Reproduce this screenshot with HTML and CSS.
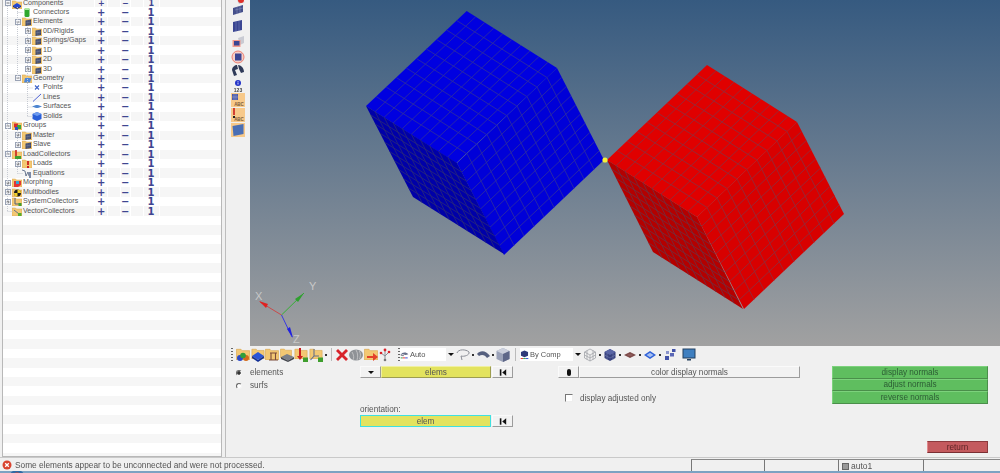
FILE: index.html
```html
<!DOCTYPE html>
<html lang="en">
<head>
<meta charset="utf-8">
<title>Normals</title>
<link rel="stylesheet" href="styles.css">
</head>
<body>
<svg class="defs" aria-hidden="true">
  <defs>
    <symbol id="plus" viewBox="0 0 6 6"><rect x=".5" y=".5" width="5" height="5" fill="#f4f6fa" stroke="#9aa3b5"/><path d="M1.5 3h3M3 1.5v3" stroke="#555" stroke-width=".8"/></symbol>
    <symbol id="minus" viewBox="0 0 6 6"><rect x=".5" y=".5" width="5" height="5" fill="#f4f6fa" stroke="#9aa3b5"/><path d="M1.5 3h3" stroke="#555" stroke-width=".8"/></symbol>
    <symbol id="folder" viewBox="0 0 10 9"><path d="M0 1h3.5l1 1H10v7H0z" fill="#f3c873" stroke="#d9a64e" stroke-width=".5"/></symbol>
    <symbol id="f-mesh" viewBox="0 0 10 9"><use href="#folder" width="10" height="9"/><path d="M3.5 3.5 9 2.5V8L3.5 9z" fill="#3c4666"/><path d="M5.2 3v6M7 3v5.5M3.5 6 9 5" stroke="#8a93ad" stroke-width=".4"/></symbol>
    <symbol id="f-comp" viewBox="0 0 10 9"><use href="#folder" width="10" height="9"/><path d="M1 5.5 5 3l4 2.5L5 8z" fill="#2148d8"/><path d="M1 5.5V7l4 2 4-2V5.5L5 8z" fill="#0f2a96"/></symbol>
    <symbol id="f-geo" viewBox="0 0 10 9"><use href="#folder" width="10" height="9"/><path d="M3 4h6.500L8 8.500H2z" fill="#4d87d8"/></symbol>
    <symbol id="f-groups" viewBox="0 0 10 9"><use href="#folder" width="10" height="9"/><rect x="2" y="2.500" width="4" height="4" fill="#d92a2a"/><rect x="5" y="4" width="4" height="4" fill="#3aa63a"/><rect x="3" y="6" width="3" height="3" fill="#2f4fc0"/></symbol>
    <symbol id="f-load" viewBox="0 0 10 9"><use href="#folder" width="10" height="9"/><path d="M4 0v6" stroke="#c91f1f" stroke-width="1.600"/><rect x="3" y="6" width="6" height="3" fill="#3f9e2e"/></symbol>
    <symbol id="f-loads" viewBox="0 0 10 9"><use href="#folder" width="10" height="9"/><path d="M6 2v4" stroke="#c91f1f" stroke-width="1.800"/><rect x="5" y="7" width="2" height="2" fill="#c91f1f"/></symbol>
    <symbol id="f-morph" viewBox="0 0 10 9"><use href="#folder" width="10" height="9"/><path d="M2 3h7v4l-3 2H2z" fill="#e23636"/><path d="M4 3h3v3H4z" fill="#35a6d8"/></symbol>
    <symbol id="f-multi" viewBox="0 0 10 9"><use href="#folder" width="10" height="9"/><circle cx="5.500" cy="5" r="3.500" fill="#1d1d1d"/><path d="M5.500 5V1.500A3.500 3.500 0 0 1 9 5z" fill="#f1cf2a"/><path d="M5.500 5H2A3.500 3.500 0 0 0 5.500 8.500z" fill="#f1cf2a"/></symbol>
    <symbol id="f-sys" viewBox="0 0 10 9"><use href="#folder" width="10" height="9"/><path d="M3 1v6h5" fill="none" stroke="#55617c" stroke-width="1"/><rect x="6.500" y="6" width="3" height="3" fill="#3f9e2e"/></symbol>
    <symbol id="f-vec" viewBox="0 0 10 9"><use href="#folder" width="10" height="9"/><path d="M2 3l5 4" stroke="#66708a" stroke-width="1"/><rect x="6" y="6" width="3.500" height="3" fill="#57ad2c"/></symbol>
    <symbol id="conn" viewBox="0 0 10 9"><rect x="2.500" y="0" width="5" height="9" rx="1.500" fill="#2ea82e"/><rect x="2.500" y="0" width="5" height="2" rx="1" fill="#aee6a0"/></symbol>
    <symbol id="pts" viewBox="0 0 10 9"><path d="M3 2.500 7 6.500M7 2.500 3 6.500" stroke="#3c62c8" stroke-width="1.100"/></symbol>
    <symbol id="lin" viewBox="0 0 10 9"><path d="M1 8.500 9 1" stroke="#3c52d0" stroke-width=".9"/></symbol>
    <symbol id="srf" viewBox="0 0 10 9"><path d="M0 4.500 4 3l2 0 4 1.500L6 6H4z" fill="#4f86d0"/></symbol>
    <symbol id="sld" viewBox="0 0 10 9"><path d="M5 0l4.500 2v5L5 9 .5 7V2z" fill="#2a5fd8"/><path d="M5 0l4.500 2L5 4 .5 2z" fill="#6e9bee"/></symbol>
    <symbol id="eq" viewBox="0 0 10 9"><path d="M0 1l3 1 1 5 2-4 1 4" fill="none" stroke="#4a5a78" stroke-width=".8"/><rect x="7" y="3" width="2" height="6" fill="#7d8aa6"/></symbol>

    <symbol id="b-blocks" viewBox="0 0 14 14"><use href="#folder" width="14" height="12"/><circle cx="4" cy="10" r="3" fill="#2b49c8"/><circle cx="10" cy="10" r="3" fill="#d36a1c"/><circle cx="7" cy="7.500" r="2.800" fill="#2f9e3a"/></symbol>
    <symbol id="b-stack" viewBox="0 0 14 14"><use href="#folder" width="14" height="11"/><path d="M1 8l6-4 6 4-6 4z" fill="#2b55d8"/><path d="M1 8v2l6 4 6-4V8l-6 4z" fill="#122f96"/></symbol>
    <symbol id="b-pi" viewBox="0 0 14 14"><use href="#folder" width="14" height="12"/><path d="M5 5h7M6 5v7M10.500 5v7M4 12h9" stroke="#7b4b3a" stroke-width="1.100" fill="none"/></symbol>
    <symbol id="b-plate" viewBox="0 0 14 14"><use href="#folder" width="12" height="10"/><path d="M1 9l6-3 7 3-6 3.500z" fill="#7c8088"/><path d="M1 9v2l7 3 6-3V9l-6 3.500z" fill="#44474e"/></symbol>
    <symbol id="b-force" viewBox="0 0 14 14"><use href="#folder" width="14" height="11"/><path d="M6 0v9" stroke="#c91f1f" stroke-width="2"/><path d="M3 8h6l-3 4z" fill="#c91f1f"/><rect x="9" y="9.500" width="5" height="4.500" fill="#3f9e2e"/></symbol>
    <symbol id="b-axis" viewBox="0 0 14 14"><use href="#folder" width="14" height="11"/><path d="M5 1v7L1.500 12M5 8h5" fill="none" stroke="#66708a" stroke-width="1.100"/><rect x="9" y="9.500" width="5" height="4.500" fill="#3f9e2e"/></symbol>
    <symbol id="b-x" viewBox="0 0 14 14"><path d="M3 1l4 4 4-4 2 2-4 4 4 4-2 2-4-4-4 4-2-2 4-4-4-4z" fill="#d8232a"/></symbol>
    <symbol id="b-ball" viewBox="0 0 14 14"><ellipse cx="7" cy="7" rx="7" ry="5.500" fill="#8f9296"/><path d="M3 4c2 3 2 6 1 8M7 2c2 3 2 7 1 10M10.500 3c1.500 3 1 6 0 8" stroke="#d3d3d3" stroke-width=".7" fill="none"/></symbol>
    <symbol id="b-fold" viewBox="0 0 14 14"><use href="#folder" width="14" height="12"/><path d="M3 8h6V5l5 4-5 4v-3H3z" fill="#e3402a"/></symbol>
    <symbol id="b-tree" viewBox="0 0 14 14"><path d="M7 1v12M3 5l4 3 4-4" fill="none" stroke="#8b8e96" stroke-width="1"/><circle cx="7" cy="2" r="1.400" fill="#d8232a"/><circle cx="3" cy="5" r="1.300" fill="#d8232a"/><circle cx="11" cy="4" r="1.300" fill="#d8232a"/><circle cx="7" cy="12" r="1.300" fill="#777"/></symbol>
    <symbol id="b-shade" viewBox="0 0 14 14"><path d="M1 7c2-5 9-5 12-1L9 7 4 6z" fill="#68708a"/><path d="M1 7c2 1 3 1 5 1" stroke="#3b4158"/><path d="M1 11.500h3" stroke="#2fa344" stroke-width="1.500"/><path d="M4 11.500h4" stroke="#e33" stroke-width="1.500"/><path d="M8 11.500h4" stroke="#3650d8" stroke-width="1.500"/></symbol>
    <symbol id="b-lasso" viewBox="0 0 14 14"><path d="M1 5c1-4 9-4 12-1 1 3-5 5-8 4L6 12" fill="none" stroke="#8b8e96" stroke-width="1"/></symbol>
    <symbol id="b-wing" viewBox="0 0 14 14"><path d="M1 6c3-4 9-4 13 2l-3 2C9 7 6 6 3 8z" fill="#56607e"/></symbol>
    <symbol id="b-box" viewBox="0 0 14 14"><path d="M7 0l6.500 3v8L7 14 .5 11V3z" fill="#9ba2b8"/><path d="M7 0l6.500 3L7 6 .5 3z" fill="#ccd0dc"/><path d="M7 6l6.500-3v8L7 14z" fill="#5e6788"/></symbol>
    <symbol id="b-comp" viewBox="0 0 14 14"><path d="M7 0l5.500 2.500V8L7 10.500 1.500 8V2.500z" fill="#2f3a78"/><path d="M1 12.500h4" stroke="#e33" stroke-width="1.500"/><path d="M5 12.500h4" stroke="#2fa344" stroke-width="1.500"/><path d="M9 12.500h4" stroke="#3650d8" stroke-width="1.500"/></symbol>
    <symbol id="b-wire" viewBox="0 0 14 14"><path d="M7 1l5.500 3v6L7 13l-5.500-3V4zM7 7v6M7 7 1.500 4M7 7l5.500-3M4 2.500v9M10 2.500v9M1.500 7 7 10l5.500-3" fill="none" stroke="#9a9ca2" stroke-width=".7"/></symbol>
    <symbol id="b-solid" viewBox="0 0 14 14"><path d="M7 1l5.500 3v6L7 13l-5.500-3V4z" fill="#39437f"/><path d="M7 1l5.500 3L7 7 1.500 4z" fill="#5a66a6"/><path d="M4 5v7M10 5v7M1.500 7 7 10l5.500-3" stroke="#7e88bb" stroke-width=".5" fill="none"/></symbol>
    <symbol id="b-flat" viewBox="0 0 14 14"><path d="M1 7l6-3 6 3-6 3z" fill="#7a4a48"/><path d="M4 5.500 10 8.500M10 5.500 4 8.500" stroke="#a87070" stroke-width=".5"/></symbol>
    <symbol id="b-diamond" viewBox="0 0 14 14"><path d="M1 7l6-4 6 4-6 4z" fill="#2f61d8"/><path d="M3.500 7 7 4.800 10.500 7 7 9.200z" fill="#a6c0f2"/></symbol>
    <symbol id="b-dots" viewBox="0 0 14 14"><rect x="2" y="8" width="4" height="4" fill="#4353a8"/><rect x="7" y="5" width="4" height="3.500" fill="#5a67b5"/><rect x="9" y="1" width="3.500" height="3" fill="#4353a8"/><rect x="3" y="3" width="3" height="3" fill="#8b95cc"/></symbol>
    <symbol id="b-mon" viewBox="0 0 14 14"><rect x="1" y="1" width="12" height="9" fill="#3f7fc0" stroke="#24405f"/><path d="M5 11h4v1.500H5z" fill="#24405f"/></symbol>
    <symbol id="v-sq1" viewBox="0 0 14 14"><path d="M2 4l10-3v7L2 11z" fill="#444f8a"/><path d="M4 6l8-2M6 3v7M9 2v7" stroke="#8f98c3" stroke-width=".5"/></symbol>
    <symbol id="v-sq2" viewBox="0 0 14 14"><path d="M2 3l9-2v10l-9 2z" fill="#3a4592"/><path d="M5 2.500v10M8 2v10" stroke="#7e88bb" stroke-width=".5"/></symbol>
    <symbol id="v-sq3" viewBox="0 0 14 14"><path d="M7 3l6-2v7l-4 2z" fill="#c9cbd3"/><rect x="1.500" y="5" width="8" height="7" fill="#f29a8d"/><rect x="3" y="6" width="5.500" height="4.500" fill="#3a4592"/></symbol>
    <symbol id="v-ring" viewBox="0 0 14 14"><circle cx="7" cy="7" r="6" fill="#f6cfc9" stroke="#ec7f70"/><rect x="4" y="3.500" width="6.500" height="7" fill="#3a4592"/></symbol>
    <symbol id="v-hex" viewBox="0 0 14 14"><path d="M1 7c0-3 3-5 5-5l1 4-3 1 2 5-3 1zM7 2c3 0 6 3 6 7l-3 1-2-4z" fill="#2f3a58"/></symbol>
    <symbol id="v-info" viewBox="0 0 14 14"><circle cx="7" cy="7" r="3" fill="#2434c8"/><path d="M7 5v.8M7 6.500v2" stroke="#fff" stroke-width=".8"/></symbol>
    <symbol id="v-abc1" viewBox="0 0 14 14"><rect width="14" height="14" fill="#f7c98a"/><rect x="1" y="1" width="6" height="6" fill="#4a5aa8"/><path d="M3 1v6M5 1v6M1 4h6" stroke="#b6bedd" stroke-width=".4"/><text x="8" y="12.500" font-size="4.500" font-weight="700" text-anchor="middle" font-family="Liberation Sans" fill="#7a5a3c">ABC</text></symbol>
    <symbol id="v-abc2" viewBox="0 0 14 14"><rect width="14" height="14" fill="#f7c98a"/><path d="M3 0v7" stroke="#c91f1f" stroke-width="1.600"/><rect x="2" y="8" width="2" height="2" fill="#222"/><text x="8" y="12.500" font-size="4.500" font-weight="700" text-anchor="middle" font-family="Liberation Sans" fill="#7a5a3c">ABC</text></symbol>
    <symbol id="v-plane" viewBox="0 0 14 14"><rect width="14" height="14" fill="#f7c98a"/><path d="M1.500 3 12.500 1v10L2.500 13z" fill="#4a6fb4"/></symbol>
    <symbol id="rst" viewBox="0 0 10 8"><rect x="1" y="0" width="2" height="8" fill="#111"/><path d="M9 0v8L4 4z" fill="#111"/></symbol>
  </defs>
</svg>

<div class="app">
  <div class="main">
    <section class="tree">
      <div class="rows">
        <div class="row"><div class="name l0"><svg class="box"><use href="#minus"/></svg><svg class="ico"><use href="#f-comp"/></svg>Components</div><b>+</b><b>−</b><b>1</b></div>
        <div class="row"><div class="name l1"><i class="box"></i><svg class="ico"><use href="#conn"/></svg>Connectors</div><b>+</b><b>−</b><b>1</b></div>
        <div class="row"><div class="name l1"><svg class="box"><use href="#minus"/></svg><svg class="ico"><use href="#f-mesh"/></svg>Elements</div><b>+</b><b>−</b><b>1</b></div>
        <div class="row"><div class="name l2"><svg class="box"><use href="#plus"/></svg><svg class="ico"><use href="#f-mesh"/></svg>0D/Rigids</div><b>+</b><b>−</b><b>1</b></div>
        <div class="row"><div class="name l2"><svg class="box"><use href="#plus"/></svg><svg class="ico"><use href="#f-mesh"/></svg>Springs/Gaps</div><b>+</b><b>−</b><b>1</b></div>
        <div class="row"><div class="name l2"><svg class="box"><use href="#plus"/></svg><svg class="ico"><use href="#f-mesh"/></svg>1D</div><b>+</b><b>−</b><b>1</b></div>
        <div class="row"><div class="name l2"><svg class="box"><use href="#plus"/></svg><svg class="ico"><use href="#f-mesh"/></svg>2D</div><b>+</b><b>−</b><b>1</b></div>
        <div class="row"><div class="name l2"><svg class="box"><use href="#plus"/></svg><svg class="ico"><use href="#f-mesh"/></svg>3D</div><b>+</b><b>−</b><b>1</b></div>
        <div class="row"><div class="name l1"><svg class="box"><use href="#minus"/></svg><svg class="ico"><use href="#f-geo"/></svg>Geometry</div><b>+</b><b>−</b><b>1</b></div>
        <div class="row"><div class="name l2"><i class="box"></i><svg class="ico"><use href="#pts"/></svg>Points</div><b>+</b><b>−</b><b>1</b></div>
        <div class="row"><div class="name l2"><i class="box"></i><svg class="ico"><use href="#lin"/></svg>Lines</div><b>+</b><b>−</b><b>1</b></div>
        <div class="row"><div class="name l2"><i class="box"></i><svg class="ico"><use href="#srf"/></svg>Surfaces</div><b>+</b><b>−</b><b>1</b></div>
        <div class="row"><div class="name l2"><i class="box"></i><svg class="ico"><use href="#sld"/></svg>Solids</div><b>+</b><b>−</b><b>1</b></div>
        <div class="row"><div class="name l0"><svg class="box"><use href="#minus"/></svg><svg class="ico"><use href="#f-groups"/></svg>Groups</div><b>+</b><b>−</b><b>1</b></div>
        <div class="row"><div class="name l1"><svg class="box"><use href="#plus"/></svg><svg class="ico"><use href="#f-mesh"/></svg>Master</div><b>+</b><b>−</b><b>1</b></div>
        <div class="row"><div class="name l1"><svg class="box"><use href="#plus"/></svg><svg class="ico"><use href="#f-mesh"/></svg>Slave</div><b>+</b><b>−</b><b>1</b></div>
        <div class="row"><div class="name l0"><svg class="box"><use href="#minus"/></svg><svg class="ico"><use href="#f-load"/></svg>LoadCollectors</div><b>+</b><b>−</b><b>1</b></div>
        <div class="row"><div class="name l1"><svg class="box"><use href="#plus"/></svg><svg class="ico"><use href="#f-loads"/></svg>Loads</div><b>+</b><b>−</b><b>1</b></div>
        <div class="row"><div class="name l1"><i class="box"></i><svg class="ico"><use href="#eq"/></svg>Equations</div><b>+</b><b>−</b><b>1</b></div>
        <div class="row"><div class="name l0"><svg class="box"><use href="#plus"/></svg><svg class="ico"><use href="#f-morph"/></svg>Morphing</div><b>+</b><b>−</b><b>1</b></div>
        <div class="row"><div class="name l0"><svg class="box"><use href="#plus"/></svg><svg class="ico"><use href="#f-multi"/></svg>Multibodies</div><b>+</b><b>−</b><b>1</b></div>
        <div class="row"><div class="name l0"><svg class="box"><use href="#plus"/></svg><svg class="ico"><use href="#f-sys"/></svg>SystemCollectors</div><b>+</b><b>−</b><b>1</b></div>
        <div class="row"><div class="name l0"><i class="box"></i><svg class="ico"><use href="#f-vec"/></svg>VectorCollectors</div><b>+</b><b>−</b><b>1</b></div>
      </div>
      <div class="tree-fill"></div>
      <svg class="tree-lines" width="220" height="220" viewBox="0 0 220 220" aria-hidden="true">
        <path d="M4.500 6V211.500M14.500 7V79M24.500 27V117M14.500 130V145.500M14.500 159V173.500M14.500 12.500H20M24.500 88H30M24.500 97.500H30M24.500 107H30M24.500 116.500H30M14.500 173.500H20M4.500 211.500H10" fill="none" stroke="#c6cad2" stroke-dasharray="1 1"/>
      </svg>
    </section>

    <div class="workspace">
      <div class="top">
        <nav class="vbar">
          <svg class="vi" viewBox="0 10 14 4"><path d="M6 10l8 2-6 2z" fill="#c9cbd3"/><circle cx="10" cy="10" r="3" fill="#e0302a"/></svg>
          <svg class="vi"><use href="#v-sq1"/></svg>
          <svg class="vi"><use href="#v-sq2"/></svg>
          <svg class="vi"><use href="#v-sq3"/></svg>
          <svg class="vi"><use href="#v-ring"/></svg>
          <svg class="vi"><use href="#v-hex"/></svg>
          <svg class="vi"><use href="#v-info"/></svg>
          <span class="v123">123</span>
          <svg class="vi"><use href="#v-abc1"/></svg>
          <svg class="vi"><use href="#v-abc2"/></svg>
          <svg class="vi"><use href="#v-plane"/></svg>
        </nav>
        <svg class="view" viewBox="250 0 750 346" preserveAspectRatio="none" role="img" aria-label="Two meshed cubes">
          <defs>
            <linearGradient id="sky" x1="0" y1="0" x2="0" y2="1"><stop offset="0" stop-color="#365a80"/><stop offset="1" stop-color="#a1a1a1"/></linearGradient>
            <path id="grid" d="M10 0V100M20 0V100M30 0V100M40 0V100M50 0V100M60 0V100M70 0V100M80 0V100M90 0V100M0 10H100M0 20H100M0 30H100M0 40H100M0 50H100M0 60H100M0 70H100M0 80H100M0 90H100" vector-effect="non-scaling-stroke" fill="none"/>
            <rect id="sq" width="100" height="100"/>
          </defs>
          <rect x="250" width="750" height="346" fill="url(#sky)"/>
          <g class="blue">
            <g transform="matrix(.903 .57 -1.007 .95 466.700 11)"><use href="#sq" fill="#0000e0"/><use href="#grid" class="line"/></g>
            <g transform="matrix(-1 .95 .47 .92 557 68)"><use href="#sq" fill="#0000d8"/><use href="#grid" class="line"/></g>
            <g transform="matrix(.91 .57 .47 .91 366 106)" class="shade"><use href="#sq" fill="#0000a8"/><use href="#grid" class="line"/></g>
          </g>
          <g class="red">
            <g transform="matrix(.9 .57 -1 .95 707 65)"><use href="#sq" fill="#e00000"/><use href="#grid" class="line"/></g>
            <g transform="matrix(-1 .95 .47 .92 797 122)"><use href="#sq" fill="#d80000"/><use href="#grid" class="line"/></g>
            <g transform="matrix(.9 .57 .46 .92 607 160)" class="shade"><use href="#sq" fill="#b40000"/><use href="#grid" class="line"/></g>
          </g>
          <circle cx="605" cy="160" r="2.600" fill="#f7f23a"/>
          <path d="M281.500 315 260 302" stroke="#c94a4a"/><path d="M259 301l9 3-2 4z" fill="#e02020"/>
          <path d="M281.500 315 304 293" stroke="#35b035"/><path d="M304 293l-6 9-3-3z" fill="#2ea02e"/>
          <path d="M281.500 315 292 337" stroke="#3a3ae0"/><path d="M293 338l-6-9 3-2z" fill="#2020e0"/>
          <text x="255" y="300" class="axis">X</text>
          <text x="309" y="290" class="axis">Y</text>
          <text x="293" y="343" class="axis">Z</text>
        </svg>
      </div>

      <div class="bottom">
        <div class="hbar">
          <i class="grip"></i>
          <svg class="ti"><use href="#b-blocks"/></svg>
          <svg class="ti"><use href="#b-stack"/></svg>
          <svg class="ti"><use href="#b-pi"/></svg>
          <svg class="ti"><use href="#b-plate"/></svg>
          <svg class="ti"><use href="#b-force"/></svg>
          <svg class="ti"><use href="#b-axis"/></svg>
          <i class="dot"></i>
          <i class="sep narrow"></i>
          <svg class="ti"><use href="#b-x"/></svg>
          <svg class="ti"><use href="#b-ball"/></svg>
          <svg class="ti"><use href="#b-fold"/></svg>
          <svg class="ti"><use href="#b-tree"/></svg>
          <i class="grip g2"></i>
          <div class="combo"><svg class="ci"><use href="#b-shade"/></svg><span>Auto</span></div>
          <i class="arrow"></i>
          <svg class="ti tight"><use href="#b-lasso"/></svg><i class="dot"></i>
          <svg class="ti tight"><use href="#b-wing"/></svg><i class="dot"></i>
          <svg class="ti tight"><use href="#b-box"/></svg>
          <i class="sep"></i>
          <div class="combo wide"><svg class="ci"><use href="#b-comp"/></svg><span>By Comp</span></div>
          <i class="arrow"></i>
          <svg class="ti tight"><use href="#b-wire"/></svg><i class="dot"></i>
          <svg class="ti tight"><use href="#b-solid"/></svg><i class="dot"></i>
          <svg class="ti tight"><use href="#b-flat"/></svg><i class="dot"></i>
          <svg class="ti tight"><use href="#b-diamond"/></svg><i class="dot"></i>
          <svg class="ti tight"><use href="#b-dots"/></svg>
          <svg class="ti mon"><use href="#b-mon"/></svg>
        </div>
        <div class="form">
          <div class="radios">
            <label class="radio"><i class="rb on"></i>elements</label>
            <label class="radio"><i class="rb"></i>surfs</label>
          </div>
          <div class="selectors">
            <div class="sel">
              <button class="btn drop"><i></i></button>
              <button class="yellow grow">elems</button>
              <button class="btn rs"><svg><use href="#rst"/></svg></button>
            </div>
            <div class="orient">orientation:</div>
            <div class="sel">
              <button class="yellow grow active">elem</button>
              <button class="btn rs"><svg><use href="#rst"/></svg></button>
            </div>
          </div>
          <div class="colors">
            <div class="sel">
              <button class="btn tog"><i></i></button>
              <button class="btn grow">color display normals</button>
            </div>
            <label class="check"><i></i>display adjusted only</label>
          </div>
          <div class="actions">
            <button class="green">display normals</button>
            <button class="green">adjust normals</button>
            <button class="green">reverse normals</button>
            <button class="return">return</button>
          </div>
        </div>
      </div>
    </div>
  </div>

  <footer class="status">
    <div class="msg"><svg class="err" viewBox="0 0 10 10"><circle cx="5" cy="5" r="4.500" fill="#d9432f"/><path d="M3.200 3.200l3.600 3.600M6.800 3.200 3.200 6.800" stroke="#fff" stroke-width="1.300"/></svg>Some elements appear to be unconnected and were not processed.</div>
    <div class="cell c1"></div>
    <div class="cell c2"></div>
    <div class="cell c3"><i></i>auto1</div>
    <div class="cell c4"></div>
  </footer>
  <div class="taskbar"><i class="orb"></i></div>
</div>
</body>
</html>
```
FILE: styles.css
```css
* { box-sizing: border-box; }
html, body { margin: 0; height: 100%; overflow: hidden; }
body { background: #f0f0f0; font-family: "Liberation Sans", Arial, sans-serif; color: #555; }
.defs { position: absolute; width: 0; height: 0; }
.app { width: 1000px; height: 473px; display: flex; flex-direction: column; overflow: hidden; filter: blur(.4px); }
.main { height: 457px; display: flex; flex: none; }

/* tree */
.tree { position: relative; width: 220px; margin: 0 3px 0 2px; flex: none; display: flex; flex-direction: column; background: #fff; border: solid #b8b8b8; border-width: 0 1px 1px 1px; overflow: hidden; }
.tree-lines { position: absolute; left: 0; top: 0; }
.rows { flex: none; }
.row { height: 9.47px; display: grid; grid-template-columns: 94px 24px 26.500px 1fr; align-items: center; font-size: 7.1px; line-height: 9px; white-space: nowrap; }
.row:first-child { height: 7.470px; line-height: 6px; align-items: start; padding-top: 0; }
.row:nth-child(odd) { background: linear-gradient(to right, #f6f6f6 91px, #fff 91px 92px, #f6f6f6 92px 104px, #fff 104px 105px, #f6f6f6 105px 117px, #fff 117px 118px, #f6f6f6 118px 127px, #fff 127px 128px, #f6f6f6 128px 140px, #fff 140px 141px, #f6f6f6 141px 156px, #fff 156px 157px, #f6f6f6 157px); }
.row b { font: bold 10px/9px "DejaVu Sans", sans-serif; color: #3f4590; }
.row:first-child b { font-size: 8px; line-height: 8px; padding-left: 1px; }
.name { display: flex; align-items: center; gap: 1px; min-width: 0; }
.row:first-child .name { align-items: flex-start; }
.l0 { padding-left: 2px; }
.l1 { padding-left: 12px; }
.l2 { padding-left: 22px; }
.box { width: 6px; height: 6px; flex: none; display: block; }
.ico { width: 10px; height: 9px; flex: none; }
.tree-fill { flex: 1; background: repeating-linear-gradient(to bottom, #fff 0 9.47px, #f6f6f6 9.47px 18.94px); }

/* workspace */
.workspace { flex: 1; display: flex; flex-direction: column; border-left: 1px solid #bdbdbd; min-width: 0; }
.top { height: 347px; flex: none; display: flex; }
.vbar { width: 24px; flex: none; display: grid; grid-template-rows: 4px 14px 16px 16px 13px 14px 11px 5px 14px 15px 15px; justify-items: center; align-items: center; align-content: start; }
.vi { width: 14px; height: 14px; display: block; }
.vi:first-child { height: 4px; }
.v123 { font: bold 5px/5px "Liberation Sans", sans-serif; color: #444; }
.view { flex: 1; height: 346px; display: block; min-width: 0; }
.line { stroke-width: .8px; }
.blue .line { stroke: #30309c; }
.red .line { stroke: #8a3040; }
.blue .shade .line { stroke: #2a2a78; }
.red .shade .line { stroke: #6e3040; }
.axis { font: 11px "Liberation Sans", sans-serif; fill: #c8c8c8; }

/* bottom panel */
.bottom { flex: 1; display: flex; flex-direction: column; font-size: 8.2px; }
.hbar { height: 15px; flex: none; display: flex; align-items: center; padding-left: 5px; }
.grip { width: 2px; height: 13px; margin-right: 3px; flex: none; background: repeating-linear-gradient(to bottom, #666 0 1px, transparent 1px 3px); }
.g2 { margin-left: 5px; margin-right: 0; }
.ti { width: 14px; height: 14px; margin-right: .6px; flex: none; display: block; }
.tight { margin: 0 1px; }
.dot { width: 2px; height: 2px; background: #333; flex: none; margin: 0 1px; }
.sep { width: 1px; height: 13px; background: #bbb; flex: none; margin: 0 4px; }
.sep.narrow { margin: 0 3px; }
.combo { width: 46px; height: 13px; background: #fff; flex: none; display: flex; align-items: center; gap: 0; font-size: 7.500px; }
.combo.wide { width: 53px; }
.ci { width: 9px; height: 12px; flex: none; margin-right: 1px; }
.arrow { width: 0; height: 0; border: 3px solid transparent; border-top-color: #111; border-bottom-width: 0; margin: 0 1px 0 2px; flex: none; }
.mon { margin-left: 4px; }
.form { flex: 1; display: flex; padding: 4px 12px 3px 0; min-height: 0; }
.radios { width: 134px; flex: none; padding-left: 10px; }
.radio { display: flex; align-items: center; height: 13px; gap: 8px; }
.rb { width: 6px; height: 6px; border-radius: 50%; background: #fff; border: 1px solid #888; border-color: #666 #f4f4f4 #f4f4f4 #666; flex: none; }
.rb.on { background: radial-gradient(circle, #333 0 1.500px, #f4f4f4 2px); }
.selectors { width: 153px; flex: none; }
.sel { display: flex; height: 12px; }
.grow { flex: 1; min-width: 0; }
button { font: inherit; color: #555; padding: 0; margin: 0; border: 0; display: flex; align-items: center; justify-content: center; }
.btn { height: 12px; background: #f2f2f2; border: 1px solid; border-color: #fafafa #9c9c9c #9c9c9c #fafafa; }
.drop { width: 21px; }
.drop i { border: 3.500px solid transparent; border-top-color: #111; border-bottom-width: 0; }
.rs { width: 21px; margin-left: 1px; }
.rs svg { width: 8px; height: 7px; }
.yellow { height: 12px; background: #e3e35e; border: 1px solid; border-color: #f0f0a0 #9d9d50 #9d9d50 #f0f0a0; }
.yellow.active { border: 1px solid #3fe0e0; }
.orient { margin-top: 26px; height: 11px; line-height: 11px; }
.colors { width: 242px; margin-left: 45px; flex: none; }
.tog { width: 21px; }
.tog i { width: 4px; height: 7px; border-radius: 2px; background: #111; }
.check { display: flex; align-items: center; height: 10px; margin-top: 15px; padding-left: 7px; gap: 7px; }
.check i { width: 8px; height: 8px; background: #fff; border: 1px solid; border-color: #777 #eee #eee #777; flex: none; }
.actions { width: 156px; margin-left: 32px; flex: none; display: flex; flex-direction: column; align-items: flex-end; }
.green { width: 100%; height: 12.500px; background: #5fbe5f; border: 1px solid; border-color: #7cd27c #4a8f4a #4a8f4a #7cd27c; color: #2c5c34; }
.return { width: 61px; height: 12px; margin-top: auto; margin-bottom: 1px; background: #c45a5e; border: 1px solid; border-color: #8d3a3e #8d3a3e #7a2f33 #e08a8e; color: #5e2426; }

/* status */
.status { height: 14px; flex: none; display: flex; border-top: 1px solid #c9c9c9; font-size: 8.300px; }
.msg { width: 691px; display: flex; align-items: center; gap: 3px; padding-left: 2px; flex: none; white-space: nowrap; }
.err { width: 10px; height: 10px; flex: none; }
.cell { height: 13px; margin-top: 1px; border-left: 1px solid #777; border-top: 1px solid #888; display: flex; align-items: center; gap: 2px; font-size: 8.500px; flex: none; }
.c1 { width: 73px; }
.c2 { width: 74px; }
.c3 { width: 85px; padding-left: 3px; }
.c3 i { width: 7px; height: 7px; background: #999; border: 1px solid #666; }
.c4 { flex: 1; }
.taskbar { flex: 1; background: #7ca2c2; overflow: hidden; }
.orb { display: block; width: 16px; height: 16px; margin: -1px 0 0 9px; border-radius: 50%; background: radial-gradient(circle, #d9432f 0 5px, #2f6aa5 6px); }
```
